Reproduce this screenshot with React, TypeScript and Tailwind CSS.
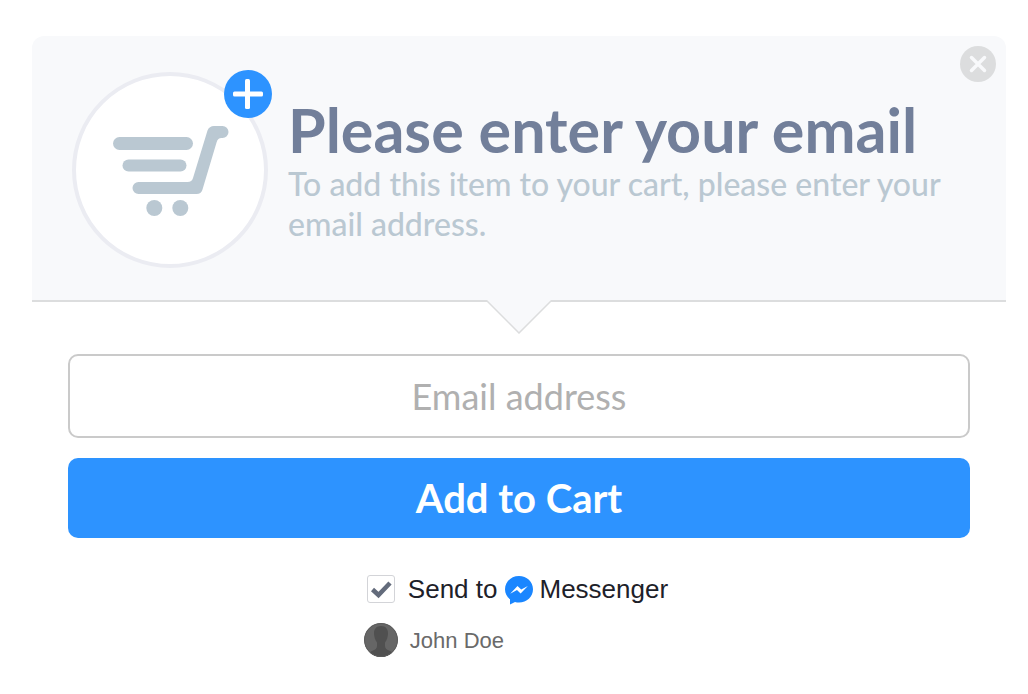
import { useState } from "react";

function CartIcon() {
  return (
    <svg viewBox="0 0 116 92" className="h-[92px] w-[116px]" fill="#bac8d2" aria-hidden="true">
      <rect x="0" y="11" width="80" height="13" rx="6.5" />
      <rect x="9.5" y="33.5" width="64" height="12" rx="6" />
      <path d="M25.5 56H74.5C77.5 56 79.3 54.5 80 52L94.5 4.5C95.5 1.5 98 0 101 0H109.5A6 6 0 0 1 109.5 12H108.5C106 12 104.5 13.5 103.7 16L89.5 63.5C88.7 66.5 86.5 68 83.5 68H25.5A6 6 0 0 1 25.5 56Z" />
      <circle cx="41.3" cy="82" r="8" />
      <circle cx="67.3" cy="82" r="8" />
    </svg>
  );
}

function PlusBadge() {
  return (
    <span className="absolute -top-0.5 left-[152px] flex size-12 items-center justify-center rounded-full bg-[#2d93ff]">
      <svg viewBox="0 0 30 30" className="size-[30px]" fill="white" aria-hidden="true">
        <rect x="12" y="0" width="5" height="30" rx="1.5" />
        <rect x="0" y="12.5" width="30" height="5" rx="1.5" />
      </svg>
    </span>
  );
}

function MessengerIcon() {
  return (
    <svg viewBox="0 0 28 32" className="h-8 w-7" aria-hidden="true">
      <path
        d="M14 3C6.2 3 0 8.9 0 16.3C0 20.3 1.8 23.8 5 26.3V31.5L10 29C11.3 29.4 12.6 29.6 14 29.6C21.8 29.6 28 23.7 28 16.3S21.8 3 14 3Z"
        fill="#1a86ff"
      />
      <path d="M5.2 20.7L12.5 12.9L16.2 16.6L22.9 12.9L15.6 20.6L12 16.9Z" fill="white" />
    </svg>
  );
}

function Avatar() {
  return (
    <svg viewBox="0 0 34 34" className="size-[34px] rounded-full" aria-hidden="true">
      <rect width="34" height="34" fill="#666666" />
      <path
        d="M17 3C12.5 3 10 5.8 10 10C10 13.5 11 17 13 19.5V23C13 25.5 11.5 26.5 9 27.5C6.8 28.4 5.5 29.5 4.5 31V34H29.5V31C28.5 29.5 27.2 28.4 25 27.5C22.5 26.5 21 25.5 21 23V19.5C23 17 24 13.5 24 10C24 5.8 21.5 3 17 3Z"
        fill="#505050"
      />
      <circle cx="17" cy="17" r="16.5" fill="none" stroke="#5c5c5c" />
    </svg>
  );
}

export default function App() {
  const [email, setEmail] = useState("");
  const [send, setSend] = useState(true);

  return (
    <main className="min-h-screen bg-white pt-9 pr-[22px] pb-8 pl-8 font-['Lato',sans-serif]">
      <header className="relative flex items-center gap-5 rounded-t-xl border-b-2 border-[#dcddde] bg-[#f8f9fb] px-10 pt-9 pb-8">
        <div className="relative flex size-[196px] shrink-0 items-center justify-center rounded-full border-4 border-[#ebecf2] bg-white pt-1 pl-0.5">
          <CartIcon />
          <div className="absolute -inset-1">
            <PlusBadge />
          </div>
        </div>
        <div>
          <h1 className="text-[61px] leading-[68px] font-bold text-[#727f9a]">Please enter your email</h1>
          <p className="text-[32px] leading-10 font-medium text-[#bac8d2]">
            To add this item to your cart, please enter your email address.
          </p>
        </div>
        <button
          type="button"
          aria-label="Close"
          className="absolute top-2.5 right-2.5 flex size-9 items-center justify-center rounded-full bg-[#dcddde]"
        >
          <svg viewBox="0 0 18 18" className="size-[18px]" stroke="#f8f9fb" strokeWidth="3.5" strokeLinecap="round" aria-hidden="true">
            <path d="M2.5 2.5L15.5 15.5M15.5 2.5L2.5 15.5" />
          </svg>
        </button>
        <svg
          viewBox="0 0 66 34"
          className="absolute top-full left-1/2 h-[34px] w-[66px] -translate-x-1/2"
          aria-hidden="true"
        >
          <path d="M0 0H66L33 33Z" fill="#f8f9fb" />
          <path d="M0 0L33 33L66 0" fill="none" stroke="#dcddde" strokeWidth="1.5" />
        </svg>
      </header>

      <form className="px-9 pt-[52px]" onSubmit={(e) => e.preventDefault()}>
        <input
          type="email"
          aria-label="Email address"
          placeholder="Email address"
          value={email}
          onChange={(e) => setEmail(e.target.value)}
          className="block h-[84px] w-full rounded-[10px] border-2 border-[#cacaca] bg-white px-6 text-center text-[36px] text-[#444444] placeholder:text-[#b0b0b0]"
        />
        <button
          type="submit"
          className="mt-5 block h-20 w-full rounded-[10px] bg-[#2d93ff] text-[40px] leading-[48px] font-bold text-white"
        >
          Add to Cart
        </button>

        <div className="mx-auto mt-[31px] w-fit pr-1.5 font-['Liberation_Sans',sans-serif]">
          <label className="flex h-10 items-center gap-2.5 text-[26px] text-[#1d2129]">
            <span className="relative flex w-[34px] justify-center">
              <input
                type="checkbox"
                checked={send}
                onChange={(e) => setSend(e.target.checked)}
                className="size-7 appearance-none rounded-[3px] border border-[#d3d4d8] bg-white"
              />
              {send && (
                <svg viewBox="0 0 28 28" className="pointer-events-none absolute size-7" aria-hidden="true">
                  <path d="M5.5 14.5L11.5 20L23 8" fill="none" stroke="#636b7b" strokeWidth="4.5" />
                </svg>
              )}
            </span>
            <span className="flex items-center gap-[7px]">
              Send to
              <MessengerIcon />
              Messenger
            </span>
          </label>
          <div className="mt-3.5 flex items-center gap-3 text-[22px] text-[#6a6a6a]">
            <Avatar />
            John Doe
          </div>
        </div>
      </form>
    </main>
  );
}
